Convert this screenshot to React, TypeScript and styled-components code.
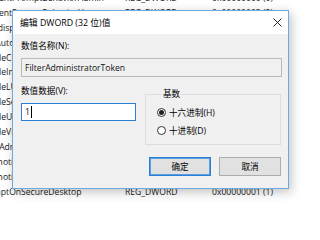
import React from "react";
import styled, { createGlobalStyle } from "styled-components";

const Global = createGlobalStyle`
  html, body { margin: 0; padding: 0; background: #fff; }
  body { width: 308px; height: 202px; overflow: hidden; }
  * { box-sizing: border-box; }
`;

const FONT = `"Open Sans", "Noto Sans CJK SC", sans-serif`;

const Screen = styled.div`
  position: relative;
  width: 308px;
  height: 202px;
  overflow: hidden;
  background: #ffffff;
  font-family: ${FONT};
  font-size: 8.6px;
  color: #1a1a1a;
`;

const List = styled.div`
  display: flex;
  flex-direction: column;
  margin-top: -9.5px;
  margin-left: -21px;
`;

const Row = styled.div`
  display: grid;
  grid-template-columns: 146px 87px 1fr;
  height: 14.9px;
  align-items: center;
  white-space: nowrap;
`;

const Dialog = styled.div`
  position: absolute;
  left: 12px;
  top: 10px;
  width: 277px;
  height: 179px;
  border: 1px solid #6fa9de;
  background: #f0f0f0;
  box-shadow: 2px 3px 10px rgba(0, 0, 0, 0.25);
  display: flex;
  flex-direction: column;
  font-family: ${FONT};
  font-size: 8.6px;
  color: #000;
`;

const TitleBar = styled.div`
  height: 23px;
  background: #ffffff;
  display: flex;
  align-items: center;
  justify-content: space-between;
  padding: 0 6px 0 7px;
  font-size: 8.8px;
`;

const Close = styled.svg`
  width: 9px;
  height: 9px;
`;

const Body = styled.div`
  flex: 1;
  display: flex;
  flex-direction: column;
  padding: 6px 6px 0 8px;
`;

const Label = styled.div`
  height: 12px;
  line-height: 12px;
`;

const TextBox = styled.div<{ $focused?: boolean; $readOnly?: boolean }>`
  margin-top: 6px;
  height: ${(p) => (p.$readOnly ? 19 : 18)}px;
  border: 1px solid ${(p) => (p.$focused ? "#2a80d6" : "#b9b9b9")};
  background: ${(p) => (p.$readOnly ? "#f0f0f0" : "#ffffff")};
  display: flex;
  align-items: center;
  padding-left: 3px;
  color: #111;
`;

const Caret = styled.span`
  display: inline-block;
  width: 1px;
  height: 12px;
  background: #000;
  margin-left: 1px;
`;

const Section = styled.div`
  margin-top: 8px;
  display: grid;
  grid-template-columns: 115px 136px;
  column-gap: 9px;
  align-items: start;
`;

const Column = styled.div`
  display: flex;
  flex-direction: column;
`;

const Group = styled.fieldset`
  margin: 3px 0 0 0;
  padding: 6px 0 0 11px;
  height: 57px;
  border: 1px solid #dcdcdc;
  display: flex;
  flex-direction: column;
  gap: 6px;
`;

const Legend = styled.legend`
  padding: 0 1px;
  margin-left: 5px;
  line-height: 12px;
  height: 12px;
`;

const RadioRow = styled.label`
  display: flex;
  align-items: center;
  gap: 3px;
  height: 12px;
`;

const RadioDot = styled.span<{ $checked?: boolean }>`
  width: 9px;
  height: 9px;
  border-radius: 50%;
  border: 1px solid #333;
  background: #fff;
  display: flex;
  align-items: center;
  justify-content: center;
  &::after {
    content: "";
    width: 5px;
    height: 5px;
    border-radius: 50%;
    background: ${(p) => (p.$checked ? "#222" : "transparent")};
  }
`;

const Buttons = styled.div`
  margin-top: 12px;
  display: flex;
  justify-content: flex-end;
  gap: 8px;
  padding-right: 1px;
`;

const Button = styled.div<{ $primary?: boolean }>`
  width: 62px;
  height: 19px;
  background: #e1e1e1;
  border: 1px solid ${(p) => (p.$primary ? "#2a80d6" : "#adadad")};
  box-shadow: ${(p) => (p.$primary ? "inset 0 0 0 1px #5a9ee0" : "none")};
  display: flex;
  align-items: center;
  justify-content: center;
`;

const rows: [string, string, string][] = [
  ["ConsentPromptBehaviorAdmin", "REG_DWORD", "0x00000000 (0)"],
  ["ConsentPromptBehaviorUser", "REG_DWORD", "0x00000003 (3)"],
  ["dontdisplaylastusername", "REG_DWORD", "0x00000000 (0)"],
  ["DSCAutomationHostEnabled", "REG_DWORD", "0x00000002 (2)"],
  ["EnableCursorSuppression", "REG_DWORD", "0x00000001 (1)"],
  ["EnableInstallerDetection", "REG_DWORD", "0x00000001 (1)"],
  ["EnableLUA", "REG_DWORD", "0x00000001 (1)"],
  ["EnableSecureUIAPaths", "REG_DWORD", "0x00000001 (1)"],
  ["EnableUIADesktopToggle", "REG_DWORD", "0x00000000 (0)"],
  ["EnableVirtualization", "REG_DWORD", "0x00000001 (1)"],
  ["FilterAdministratorToken", "REG_DWORD", "0x00000001 (1)"],
  ["legalnoticecaption", "REG_SZ", ""],
  ["legalnoticetext", "REG_SZ", ""],
  ["PromptOnSecureDesktop", "REG_DWORD", "0x00000001 (1)"],
];

export default function App() {
  return (
    <Screen>
      <Global />
      <List>
        {rows.map(([n, t, d]) => (
          <Row key={n}>
            <span>{n}</span>
            <span>{t}</span>
            <span>{d}</span>
          </Row>
        ))}
      </List>
      <Dialog>
        <TitleBar>
          <span>编辑 DWORD (32 位)值</span>
          <Close viewBox="0 0 9 9">
            <path d="M0.5 0.5 L8.5 8.5 M8.5 0.5 L0.5 8.5" stroke="#222" strokeWidth="1" fill="none" />
          </Close>
        </TitleBar>
        <Body>
          <Label>数值名称(N):</Label>
          <TextBox $readOnly>FilterAdministratorToken</TextBox>
          <Section>
            <Column>
              <Label>数值数据(V):</Label>
              <TextBox $focused>
                1<Caret />
              </TextBox>
            </Column>
            <Group>
              <Legend>基数</Legend>
              <RadioRow>
                <RadioDot $checked />
                十六进制(H)
              </RadioRow>
              <RadioRow>
                <RadioDot />
                十进制(D)
              </RadioRow>
            </Group>
          </Section>
          <Buttons>
            <Button $primary>确定</Button>
            <Button>取消</Button>
          </Buttons>
        </Body>
      </Dialog>
    </Screen>
  );
}
